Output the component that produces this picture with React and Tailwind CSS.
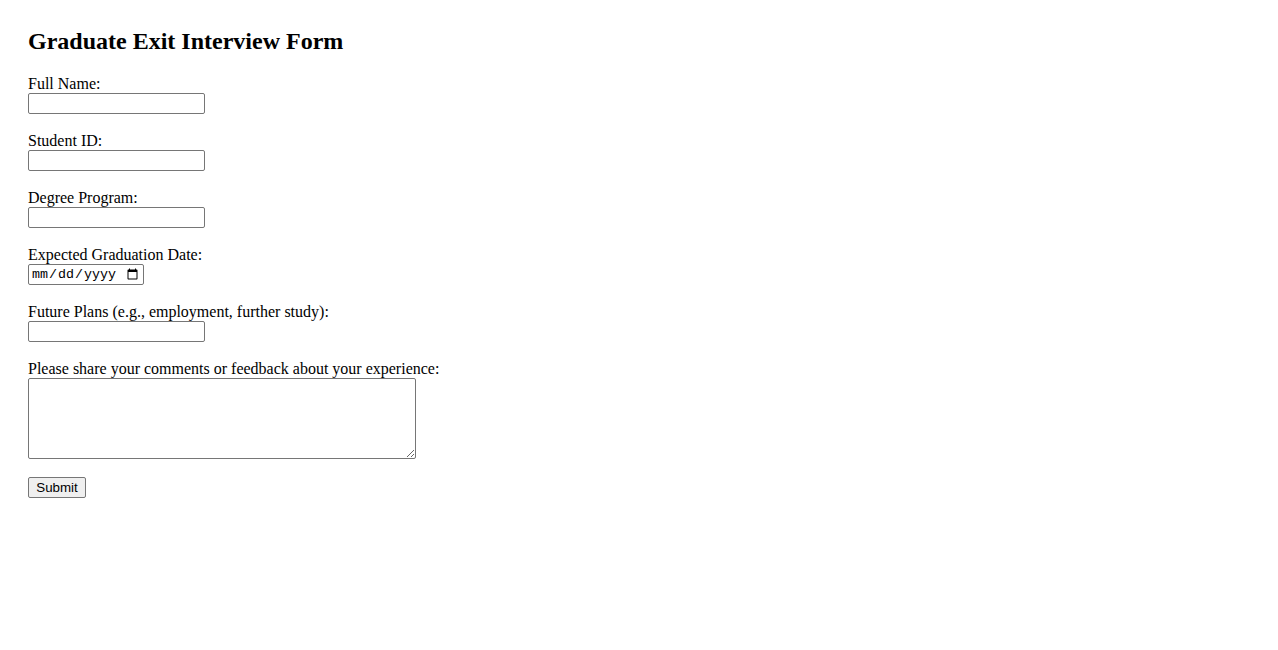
import React from 'react';

const fields = [
  { id: 'fullName', label: 'Full Name:', type: 'text' },
  { id: 'studentId', label: 'Student ID:', type: 'text' },
  { id: 'degree', label: 'Degree Program:', type: 'text' },
  { id: 'gradDate', label: 'Expected Graduation Date:', type: 'date' },
  { id: 'plans', label: 'Future Plans (e.g., employment, further study):', type: 'text' },
];

export default function App() {
  return (
    <div className="min-h-[650px] bg-white px-[28px] pt-[27px] font-['Liberation_Serif',serif] text-[16px] text-black">
      <h2 className="mb-[20px] text-[24px] font-bold leading-[28px]">Graduate Exit Interview Form</h2>
      <form onSubmit={(e) => e.preventDefault()}>
        {fields.map((field) => (
          <div key={field.id} className="mb-[18px]">
            <label htmlFor={field.id} className="block leading-[18px]">
              {field.label}
            </label>
            {field.type === 'date' ? (
              <input
                id={field.id}
                type="date"
                className="block h-[21px] w-[116px] rounded-[2px] border border-[#767676] bg-white px-[2px] font-['Liberation_Mono',monospace] text-[13.33px] text-black"
              />
            ) : (
              <input
                id={field.id}
                type="text"
                className="block h-[21px] w-[177px] rounded-[2px] border border-[#767676] bg-white px-[2px] font-['Liberation_Sans',sans-serif] text-[13.33px]"
              />
            )}
          </div>
        ))}
        <div className="mb-[18px]">
          <label htmlFor="comments" className="block leading-[18px]">
            Please share your comments or feedback about your experience:
          </label>
          <textarea
            id="comments"
            className="block h-[81px] w-[388px] rounded-[2px] border border-[#767676] bg-white px-[2px] font-['Liberation_Mono',monospace] text-[13.33px]"
          />
        </div>
        <button
          type="submit"
          className="block h-[21px] w-[58px] rounded-[2px] border border-[#767676] bg-[#efefef] font-['Liberation_Sans',sans-serif] text-[13.33px] leading-[19px] text-black"
        >
          Submit
        </button>
      </form>
    </div>
  );
}
